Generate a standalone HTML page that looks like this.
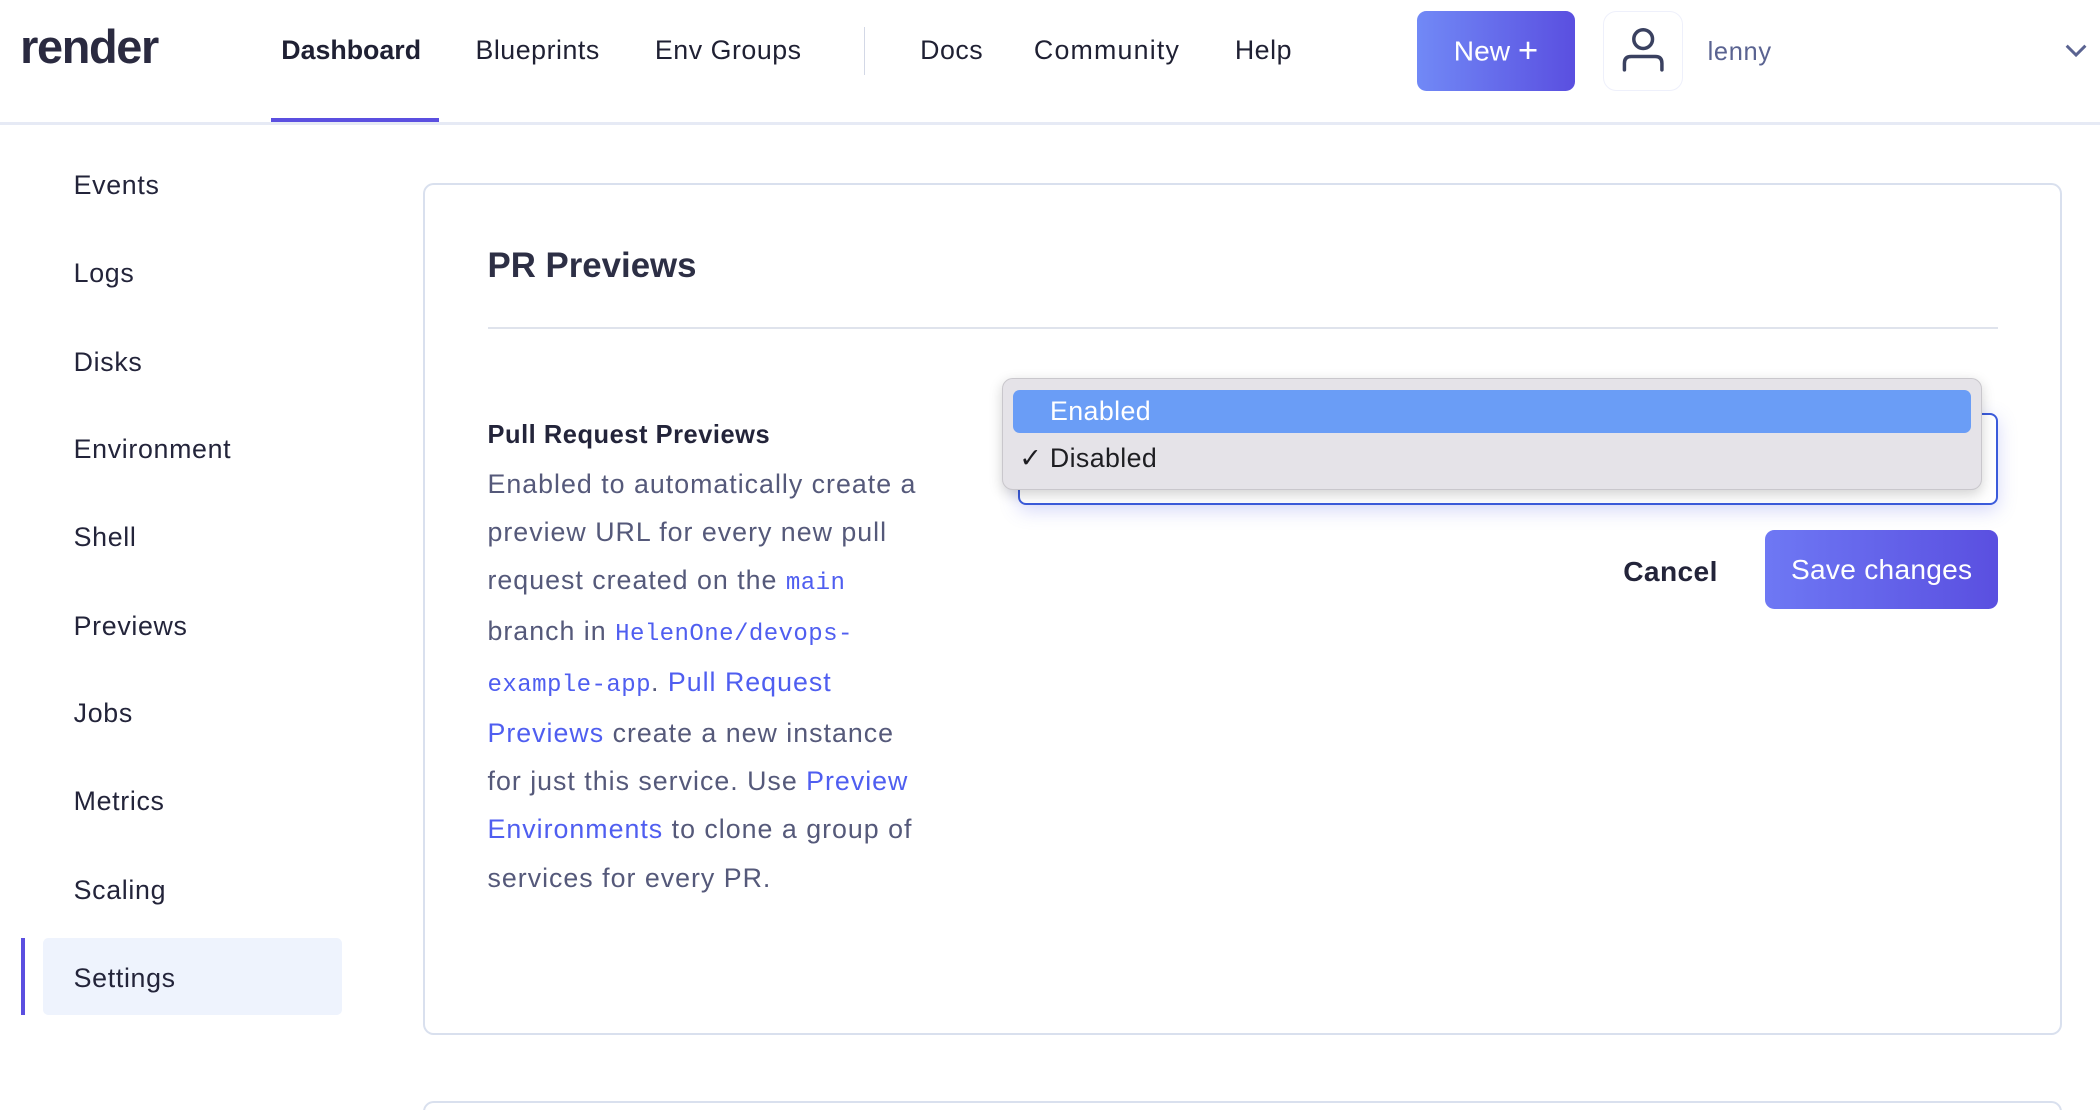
<!DOCTYPE html>
<html><head><meta charset="utf-8"><style>
html,body{margin:0;padding:0;background:#fff;overflow:hidden}
#r{position:relative;width:1568px;height:829px;zoom:1.33929;font-family:"Liberation Sans",sans-serif;color:#2a2b3d}
.a{position:absolute;white-space:nowrap}
.nav{font-size:20px;top:26px;color:#1f2033;letter-spacing:0.4px}
.side{font-size:20px;left:55px;color:#23243a;letter-spacing:0.5px}
.p{font-size:20px;left:364px;color:#55597a;letter-spacing:0.75px}
.lk{color:#4f5ef0}
.m{font-family:"Liberation Mono",monospace;font-size:18px;color:#4f5ef0;letter-spacing:0.3px}
</style></head><body><div id="r">
<div class="a" style="left:15px;top:15px;font-size:35px;font-weight:bold;color:#2a2a40;letter-spacing:-1px">render</div>
<div class="a nav" style="left:210px;font-weight:600;color:#1f2033;letter-spacing:0px">Dashboard</div>
<div class="a nav" style="left:355px">Blueprints</div>
<div class="a nav" style="left:489px">Env Groups</div>
<div class="a" style="left:645px;top:20px;width:1px;height:36px;background:#d3d8e6"></div>
<div class="a nav" style="left:687px">Docs</div>
<div class="a nav" style="left:772px;letter-spacing:0.9px">Community</div>
<div class="a nav" style="left:922px">Help</div>
<div class="a" style="left:202px;top:88px;width:126px;height:3px;background:#5b4fe0"></div>
<div class="a" style="left:0;top:91px;width:1568px;height:2px;background:#e6eaf5"></div>
<div class="a" style="left:1058px;top:8px;width:118px;height:60px;border-radius:7px;background:linear-gradient(90deg,#7189f6,#5a4fe0);color:#fff;font-size:21px;line-height:60px;text-align:center">New <span style="font-size:26px;vertical-align:-1px">+</span></div>
<div class="a" style="left:1197px;top:8px;width:60px;height:60px;border:1px solid #eef0fb;border-radius:10px;box-sizing:border-box"></div>
<svg class="a" style="left:1197px;top:8px" width="60" height="60" viewBox="0 0 60 60"><circle cx="30" cy="21" r="7" fill="none" stroke="#3a4160" stroke-width="2.6"/><path d="M16 44 V39 Q16 34 21 34 H39 Q44 34 44 39 V44" fill="none" stroke="#3a4160" stroke-width="2.6" stroke-linecap="round"/></svg>
<div class="a" style="left:1275px;top:28px;font-size:19px;color:#5a6391;letter-spacing:0.5px">lenny</div>
<svg class="a" style="left:1541px;top:32px" width="18" height="12" viewBox="0 0 18 12"><path d="M2 2 L9 9 L16 2" fill="none" stroke="#5a6391" stroke-width="2.2"/></svg>

<div class="a" style="left:32px;top:700px;width:223px;height:58px;background:#eef3fd;border-radius:4px"></div>
<div class="a" style="left:16px;top:700px;width:3px;height:58px;background:#5b4fe0"></div>
<div class="a side" style="top:127px">Events</div>
<div class="a side" style="top:193px">Logs</div>
<div class="a side" style="top:259px">Disks</div>
<div class="a side" style="top:324px">Environment</div>
<div class="a side" style="top:390px">Shell</div>
<div class="a side" style="top:456px">Previews</div>
<div class="a side" style="top:521px">Jobs</div>
<div class="a side" style="top:587px">Metrics</div>
<div class="a side" style="top:653px">Scaling</div>
<div class="a side" style="top:719px">Settings</div>

<div class="a" style="left:316px;top:137px;width:1224px;height:636px;border:1.5px solid #d9e0ee;border-radius:8px;box-sizing:border-box"></div>
<div class="a" style="left:316px;top:822px;width:1224px;height:40px;border:1.5px solid #d9e0ee;border-radius:8px;box-sizing:border-box"></div>
<div class="a" style="left:364px;top:184px;font-size:26px;font-weight:bold;color:#2d2f45">PR Previews</div>
<div class="a" style="left:364px;top:244px;width:1128px;height:2px;background:#dfe3ec"></div>
<div class="a" style="left:364px;top:314px;font-size:19px;font-weight:bold;color:#23243a;letter-spacing:0.4px">Pull Request Previews</div>
<div class="a p" style="top:350px">Enabled to automatically create a</div>
<div class="a p" style="top:386px">preview URL for every new pull</div>
<div class="a p" style="top:422px">request created on the <span class="m">main</span></div>
<div class="a p" style="top:460px">branch in <span class="m">HelenOne/devops-</span></div>
<div class="a p" style="top:498px"><span class="m">example-app</span>. <span class="lk">Pull Request</span></div>
<div class="a p" style="top:536px"><span class="lk">Previews</span> create a new instance</div>
<div class="a p" style="top:572px">for just this service. Use <span class="lk">Preview</span></div>
<div class="a p" style="top:608px"><span class="lk">Environments</span> to clone a group of</div>
<div class="a p" style="top:644px">services for every PR.</div>

<div class="a" style="left:760px;top:308px;width:732px;height:69px;border:2px solid #3b5bdb;border-radius:6px;box-sizing:border-box;box-shadow:0 4px 14px rgba(90,100,230,0.25)"></div>
<div class="a" style="left:748px;top:282px;width:732px;height:84px;background:#e5e3e8;border:1px solid #c9c7cc;border-radius:8px;box-sizing:border-box;box-shadow:0 3px 10px rgba(0,0,0,0.18)"></div>
<div class="a" style="left:756px;top:291px;width:716px;height:32px;background:#6a9df6;border-radius:5px"></div>
<div class="a" style="left:784px;top:296px;font-size:20px;color:#fff;letter-spacing:0.3px">Enabled</div>
<div class="a" style="left:761px;top:331px;font-size:20px;color:#1e1e22;letter-spacing:0.3px">✓ Disabled</div>

<div class="a" style="left:1212px;top:415px;font-size:21px;font-weight:bold;color:#23243a;letter-spacing:0.3px">Cancel</div>
<div class="a" style="left:1318px;top:396px;width:174px;height:59px;border-radius:7px;background:linear-gradient(90deg,#6e78f4,#5a4fe0);color:#fff;font-size:21px;line-height:59px;text-align:center;letter-spacing:0.2px">Save changes</div>
</div></body></html>
